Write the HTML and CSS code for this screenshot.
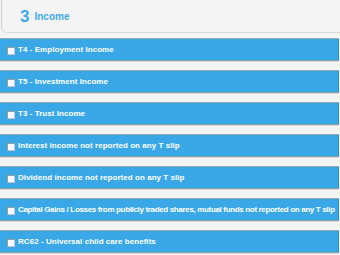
FILE: index.html
```html
<!DOCTYPE html>
<html>
<head>
<meta charset="utf-8">
<link rel="stylesheet" href="styles.css">
</head>
<body>
<div class="page">
  <div class="header">
    <span class="num">3</span>
    <span class="title">Income</span>
  </div>
  <div class="list">
    <div class="bar"><span class="cb"></span><span class="label">T4 - Employment Income</span></div>
    <div class="bar"><span class="cb"></span><span class="label">T5 - Investment Income</span></div>
    <div class="bar"><span class="cb"></span><span class="label">T3 - Trust Income</span></div>
    <div class="bar"><span class="cb"></span><span class="label">Interest income not reported on any T slip</span></div>
    <div class="bar"><span class="cb"></span><span class="label">Dividend income not reported on any T slip</span></div>
    <div class="bar"><span class="cb"></span><span class="label tight">Capital Gains / Losses from publicly traded shares, mutual funds not reported on any T slip</span></div>
    <div class="bar"><span class="cb"></span><span class="label">RC62 - Universal child care benefits</span></div>
  </div>
</div>
</body>
</html>
```
FILE: styles.css
```css
html, body {
  margin: 0;
  padding: 0;
  background: #f4f4f4;
  font-family: "Liberation Sans", Arial, sans-serif;
}
.page {
  width: 340px;
  height: 255px;
  overflow: hidden;
}
.header {
  height: 33px;
  margin-left: 1px;
  border-left: 1px solid #d0d0d0;
  border-bottom: 1px solid #dcdcdc;
  border-bottom-left-radius: 6px;
  display: flex;
  align-items: center;
  padding-left: 18px;
  box-sizing: border-box;
  color: #3ea9e6;
  font-weight: bold;
}
.num {
  font-size: 17px;
  line-height: 1;
  margin-right: 5px;
}
.title {
  font-size: 10px;
  padding-top: 1px;
}
.list {
  display: flex;
  flex-direction: column;
  gap: 9px;
  margin-top: 5px;
}
.bar {
  height: 23px;
  box-sizing: border-box;
  width: 339px;
  background: #3aa8e7;
  border-top: 1px solid #9aa4ab;
  border-bottom: 1px solid #8fa0ab;
  border-right: 1px solid #2f8fc8;
  box-shadow: 0 -1px 0 #ffffff, 0 1px 0 #dedede;
  display: flex;
  align-items: center;
  padding-left: 7px;
}
.cb {
  width: 8px;
  height: 8px;
  box-sizing: border-box;
  background: #fdfdfd;
  border: 1px solid #c4c4c4;
  border-top-color: #9a9a9a;
  border-left-color: #9a9a9a;
  margin-right: 3px;
  margin-top: 2px;
  flex: none;
}
.label {
  color: #ffffff;
  font-size: 8px;
  font-weight: bold;
  letter-spacing: 0.05px;
  white-space: nowrap;
}
.label.tight {
  letter-spacing: -0.34px;
}
```
